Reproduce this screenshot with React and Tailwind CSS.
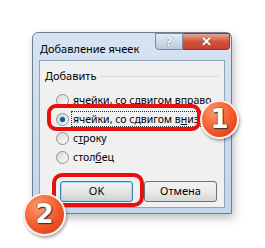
import React from 'react'

const font = { fontFamily: '"Noto Sans", "Open Sans", sans-serif' }

const Radio = ({ checked }) => (
  <span className="relative inline-block w-[13px] h-[13px] rounded-full border border-[#8f8f8f] bg-gradient-to-br from-[#d9d9d9] to-[#fbfbfb] shrink-0">
    {checked && (
      <span className="absolute left-[3px] top-[3px] w-[5px] h-[5px] rounded-full bg-[#1b5a8a] shadow-[0_0_2px_#4aa3df]" />
    )}
  </span>
)

const Badge = ({ n, className }) => (
  <div
    className={`absolute rounded-full border-2 border-white/90 bg-[radial-gradient(circle_at_35%_30%,#ff9a6a,#f2582a_55%,#c9361a)] shadow-[1px_2px_3px_rgba(0,0,0,0.35)] flex items-center justify-center text-white font-bold text-[26px] [text-shadow:0_0_2px_#333,1px_1px_1px_#333] ${className}`}
    style={{ fontFamily: '"DejaVu Sans", sans-serif' }}
  >
    {n}
  </div>
)

export default function App() {
  return (
    <div className="relative w-[265px] h-[248px] bg-white overflow-hidden" style={font}>
      <div className="pt-[32px] pl-[32px]">
        <div className="w-[200px] h-[182px] rounded-t-[6px] border border-[#6e7f92] bg-gradient-to-b from-[#d7e3f1] to-[#c3d6ec] px-[6px] pb-[5px] flex flex-col shadow-[2px_4px_8px_rgba(0,0,0,0.25)]">
          <div className="h-[27px] flex items-start relative">
            <span className="mt-[9px] ml-[1px] text-[11px] leading-[14px] text-black whitespace-nowrap">Добавление ячеек</span>
            <div className="absolute top-0 right-[-5px] flex">
              <div className="w-[28px] h-[17px] rounded-bl-[4px] border border-[#7b8a9b] bg-gradient-to-b from-[#e3ebf4] to-[#b9c9db] flex items-center justify-center text-white font-bold text-[13px] [text-shadow:0_0_1px_#333]">?</div>
              <div className="w-[47px] h-[17px] rounded-br-[4px] border border-l-0 border-[#8b3b30] bg-gradient-to-b from-[#e8a394] via-[#d0533f] to-[#c6402c] flex items-center justify-center text-white font-bold text-[13px] [text-shadow:0_0_1px_#333]">✕</div>
            </div>
          </div>
          <div className="flex-1 bg-[#f0f0f0] border border-[#8fa3b9] flex flex-col text-[10.5px] text-black whitespace-nowrap">
            <div className="mt-[8px] ml-[5px] mr-[4px] flex items-center gap-[4px] leading-[14px] text-[11px]">
              <span>Добавить</span>
              <span className="flex-1 h-px bg-[#dcdcdc]" />
            </div>
            <div className="mt-[10px] ml-[16px] flex flex-col gap-[5px] leading-[14px]">
              <div className="flex items-center gap-[4px]"><Radio /><span>ячейки, со сдвигом вправо</span></div>
              <div className="flex items-center gap-[3px]"><Radio checked /><span className="outline outline-1 outline-dotted outline-[#333] px-[1px]">ячейки, со сдвигом в<span className="underline">н</span>из</span></div>
              <div className="flex items-center gap-[4px]"><Radio /><span>с<span className="underline">т</span>року</span></div>
              <div className="flex items-center gap-[4px]"><Radio /><span>стол<span className="underline">б</span>ец</span></div>
            </div>
            <div className="mt-[17px] ml-[20px] flex gap-[11px] text-[11px]">
              <div className="w-[73px] h-[21px] rounded-[3px] border border-[#3c7fb1] bg-gradient-to-b from-[#f2f2f2] via-[#e6e6e6] to-[#d0d0d0] shadow-[inset_0_0_0_1px_#a8d8f0] flex items-center justify-center">OK</div>
              <div className="w-[73px] h-[21px] rounded-[3px] border border-[#707070] bg-gradient-to-b from-[#f2f2f2] via-[#ebebeb] to-[#d6d6d6] flex items-center justify-center">Отмена</div>
            </div>
          </div>
        </div>
      </div>

      <div className="absolute left-[47px] top-[104px] w-[154px] h-[27px] rounded-[9px] border-[4px] border-[#e8100f]" />
      <div className="absolute left-[52px] top-[173px] w-[92px] h-[34px] rounded-[10px] border-[4px] border-[#e8100f]" />
      <Badge n="1" className="left-[200px] top-[100px] w-[39px] h-[39px]" />
      <Badge n="2" className="left-[23px] top-[193px] w-[43px] h-[43px]" />
    </div>
  )
}
